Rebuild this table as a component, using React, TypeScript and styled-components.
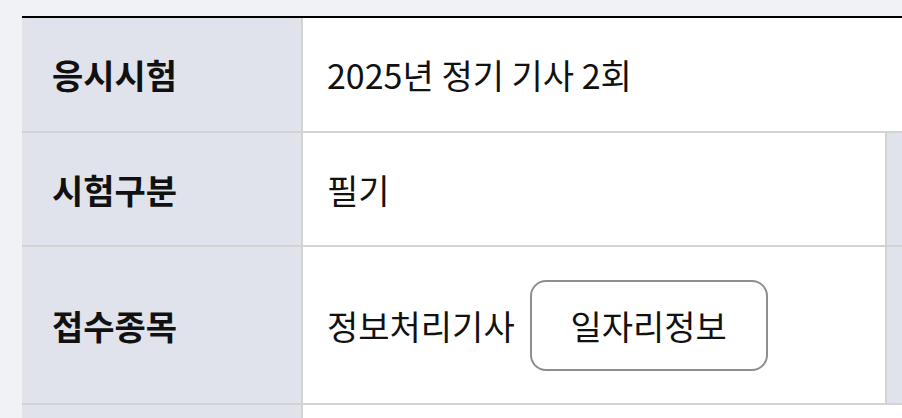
import React from "react";
import styled, { createGlobalStyle } from "styled-components";

const GlobalStyle = createGlobalStyle`
  body {
    margin: 0;
    background: #f0f2f6;
    overflow: hidden;
    font-family: "Noto Sans CJK KR", "Noto Sans", sans-serif;
    color: #111;
  }
`;

const Page = styled.div`
  height: 418px;
  overflow: hidden;
  padding: 16px 0 0 22px;
  box-sizing: border-box;
`;

const Table = styled.div`
  width: 1400px;
  border-top: 2px solid #000;
  background: #fff;
`;

const Row = styled.div<{ $height: number }>`
  display: flex;
  height: ${(p) => p.$height}px;
  border-bottom: 2px solid #d3d3d3;
`;

const Label = styled.div`
  flex: 0 0 281px;
  display: flex;
  align-items: center;
  padding-left: 30px;
  box-sizing: border-box;
  background: #e0e3ec;
  border-right: 2px solid #d3d3d3;
  font-size: 34px;
  font-weight: 700;
`;

const Value = styled.div<{ $width?: number }>`
  ${(p) => (p.$width ? `flex: 0 0 ${p.$width}px;` : "flex: 1;")}
  display: flex;
  align-items: center;
  padding-left: 24px;
  box-sizing: border-box;
  font-size: 34px;
  font-weight: 400;
  border-right: ${(p) => (p.$width ? "2px solid #d3d3d3" : "none")};
`;

const JobButton = styled.button`
  margin-left: 15px;
  width: 238px;
  height: 91px;
  border: 2px solid #8e8e8e;
  border-radius: 16px;
  background: #fff;
  font-family: inherit;
  font-size: 34px;
  color: #111;
  padding: 0;
`;

export default function App() {
  return (
    <Page>
      <GlobalStyle />
      <Table>
        <Row $height={113}>
          <Label>응시시험</Label>
          <Value>2025년 정기 기사 2회</Value>
        </Row>
        <Row $height={112}>
          <Label>시험구분</Label>
          <Value $width={584}>필기</Value>
          <Label />
        </Row>
        <Row $height={156}>
          <Label>접수종목</Label>
          <Value $width={584}>
            정보처리기사
            <JobButton>일자리정보</JobButton>
          </Value>
          <Label />
        </Row>
        <Row $height={113}>
          <Label />
          <Value />
        </Row>
      </Table>
    </Page>
  );
}
